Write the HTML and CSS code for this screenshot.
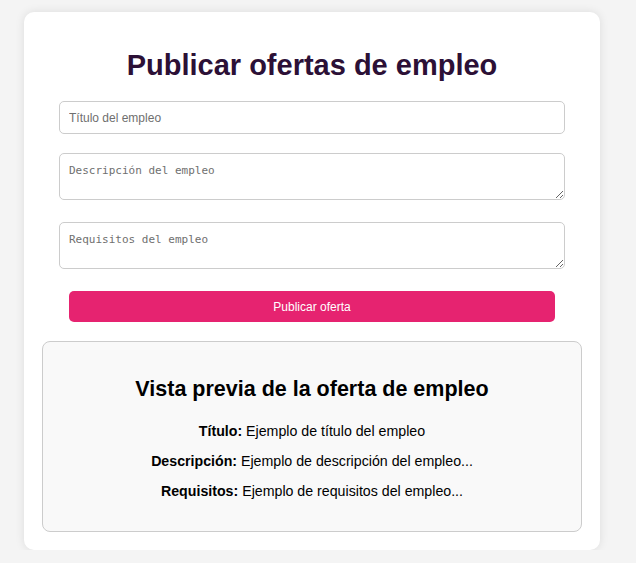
FILE: index.html
```html
<!DOCTYPE html>
<html lang="es">
<head>
<meta charset="utf-8">
<title>Publicar ofertas de empleo</title>
<link rel="stylesheet" href="styles.css">
</head>
<body>
<div class="container">
  <h1 class="title">Publicar ofertas de empleo</h1>
  <form class="form">
    <input class="field field-input" type="text" placeholder="Título del empleo">
    <textarea class="field field-area area-desc" placeholder="Descripción del empleo"></textarea>
    <textarea class="field field-area area-req" placeholder="Requisitos del empleo"></textarea>
    <button class="submit" type="button">Publicar oferta</button>
  </form>
  <div class="preview">
    <h2 class="preview-title">Vista previa de la oferta de empleo</h2>
    <p class="preview-line"><strong>Título:</strong> Ejemplo de título del empleo</p>
    <p class="preview-line"><strong>Descripción:</strong> Ejemplo de descripción del empleo...</p>
    <p class="preview-line"><strong>Requisitos:</strong> Ejemplo de requisitos del empleo...</p>
  </div>
</div>
</body>
</html>
```
FILE: styles.css
```css
html, body {
  margin: 0;
  padding: 0;
}
body {
  background: #f4f4f4;
  font-family: "Liberation Sans", Arial, sans-serif;
  padding: 12px 0 0 24px;
}
.container {
  width: 576px;
  box-sizing: border-box;
  background: #ffffff;
  border-radius: 10px;
  box-shadow: 0 0 10px rgba(0, 0, 0, 0.1);
  padding: 37px 18px 18px;
}
.title {
  margin: 0;
  text-align: center;
  font-size: 29px;
  font-weight: bold;
  color: #2c1036;
}
.form {
  display: flex;
  flex-direction: column;
  padding: 0 17px;
  margin-top: 19px;
}
.field {
  box-sizing: border-box;
  width: 100%;
  border: 1px solid #cccccc;
  border-radius: 5px;
  background: #ffffff;
  margin: 0;
  color: #000;
}
.field::placeholder {
  color: #6f6f6f;
}
.field-input {
  height: 33px;
  padding: 0 9px;
  font-family: "Liberation Sans", Arial, sans-serif;
  font-size: 12px;
}
.field-area {
  height: 47px;
  padding: 10px 9px;
  font-family: "DejaVu Sans Mono", monospace;
  font-size: 11px;
  display: block;
}
.area-desc {
  margin-top: 19px;
}
.area-req {
  margin-top: 22px;
}
.submit {
  margin: 22px 10px 0;
  height: 31px;
  border: none;
  border-radius: 5px;
  background: #e62370;
  color: #ffffff;
  font-family: "Liberation Sans", Arial, sans-serif;
  font-size: 12px;
  cursor: pointer;
}
.preview {
  margin-top: 19px;
  box-sizing: border-box;
  height: 191px;
  border: 1px solid #cccccc;
  border-radius: 8px;
  background: #f9f9f9;
  padding: 15px;
  text-align: center;
  color: #000;
}
.preview-title {
  margin: 20px 0 21px;
  font-size: 21.5px;
  font-weight: bold;
}
.preview-line {
  margin: 14px 0 0;
  font-size: 14.2px;
}
.preview-title + .preview-line {
  margin-top: 0;
}
```
